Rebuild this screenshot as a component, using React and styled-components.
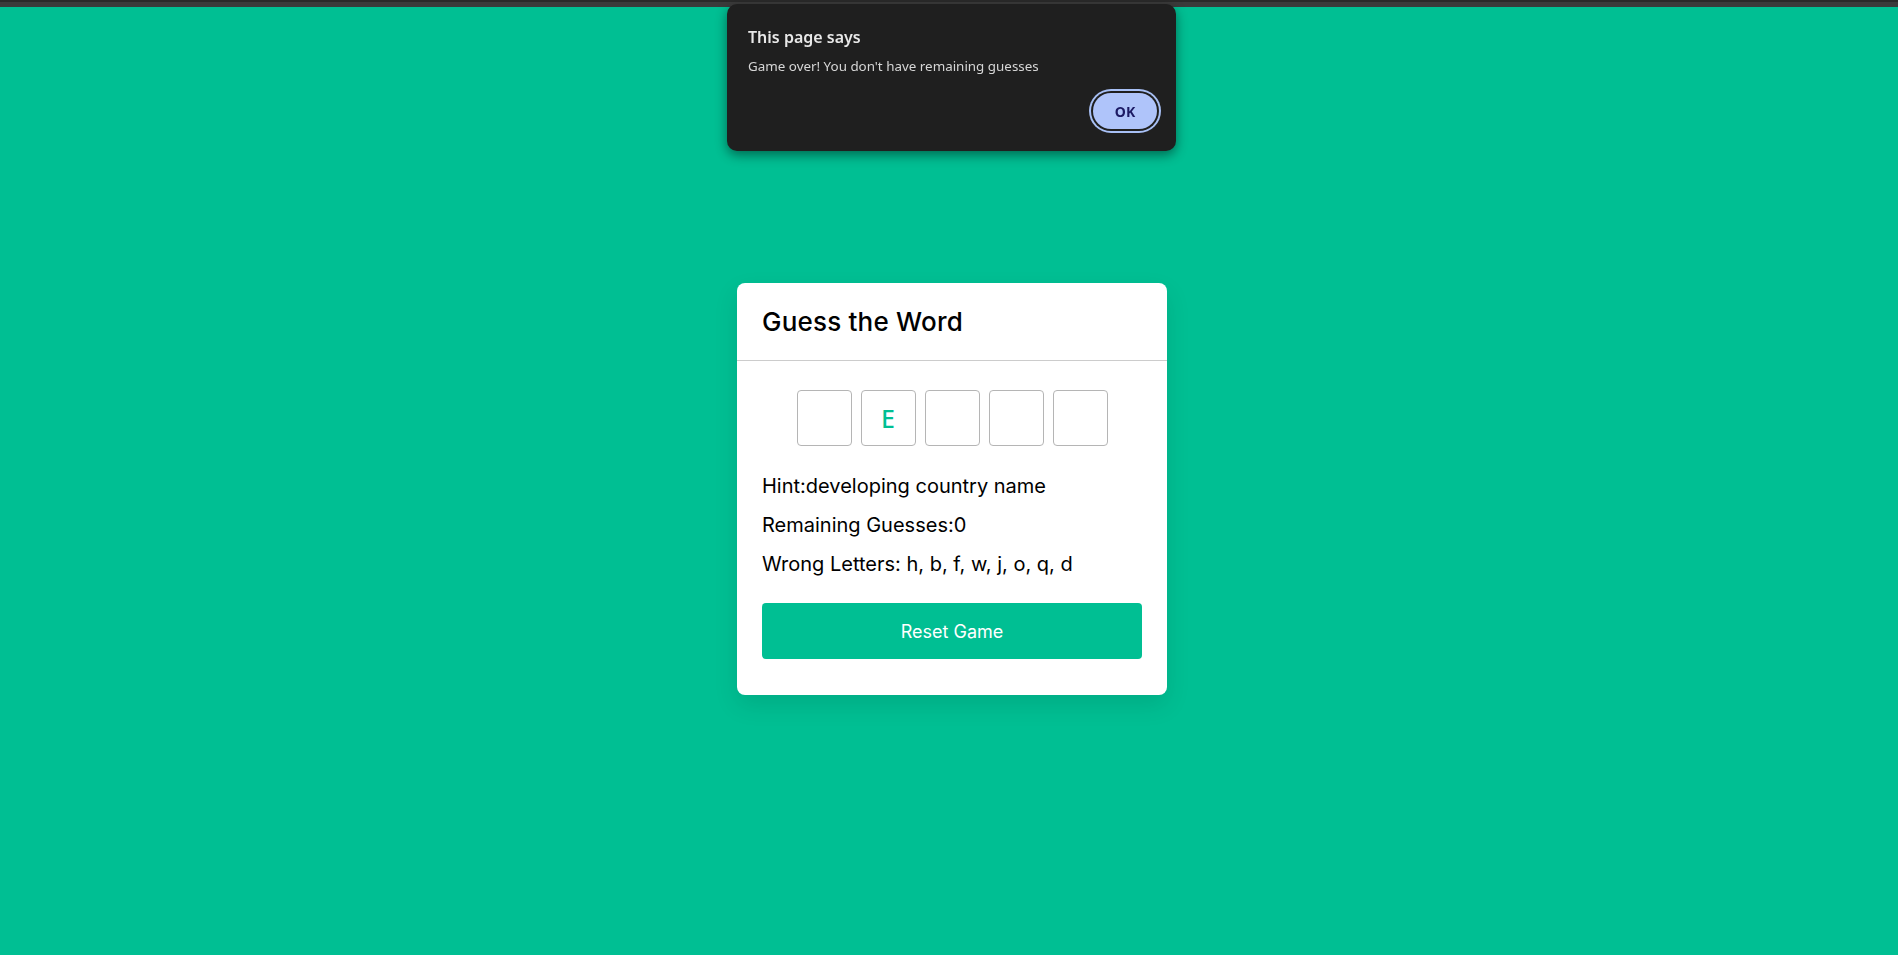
import React, { useState } from "react";
import styled, { createGlobalStyle } from "styled-components";

const GlobalStyle = createGlobalStyle`
  * { box-sizing: border-box; }
  body {
    margin: 0;
    background: #00bf93;
    font-family: "Inter", "Noto Sans", sans-serif;
  }
`;

const Page = styled.div`
  min-height: 100vh;
  display: flex;
  flex-direction: column;
`;

const TopStrip = styled.div`
  height: 7px;
  background: #3b3b3b;
  border-top: 2px solid #2a2a2a;
`;

const Main = styled.main`
  flex: 1;
  display: flex;
  align-items: center;
  justify-content: center;
  padding: 16px 0 0 6px;
`;

const Card = styled.div`
  width: 430px;
  background: #fff;
  border-radius: 8px;
  box-shadow: 0 10px 25px rgba(0, 0, 0, 0.1);
`;

const Header = styled.div`
  height: 78px;
  display: flex;
  align-items: center;
  padding: 0 25px;
  border-bottom: 1px solid #cccccc;
`;

const Title = styled.h1`
  margin: 0;
  font-size: 26px;
  font-weight: 500;
  color: #000;
  letter-spacing: 0.2px;
`;

const Body = styled.div`
  padding: 29px 25px 36px;
`;

const Boxes = styled.div`
  display: flex;
  justify-content: center;
  gap: 9px;
  margin-bottom: 20px;
`;

const LetterBox = styled.div`
  width: 55px;
  height: 56px;
  border: 1px solid #b5b5b5;
  border-radius: 4px;
  display: flex;
  align-items: center;
  justify-content: center;
  font-family: "Noto Sans", sans-serif;
  font-size: 25px;
  font-weight: 500;
  color: #00bf93;
  text-transform: uppercase;
`;

const Info = styled.p`
  margin: 0;
  height: 39px;
  display: flex;
  align-items: center;
  font-size: 20px;
  color: #000;
`;

const ResetButton = styled.button`
  display: block;
  width: 100%;
  height: 56px;
  margin-top: 20px;
  border: none;
  border-radius: 4px;
  background: #00bf93;
  color: #fff;
  font-family: "Inter", "Noto Sans", sans-serif;
  font-size: 18px;
  font-weight: 400;
  cursor: pointer;
`;

const Dialog = styled.div`
  position: fixed;
  top: 4px;
  left: 727px;
  width: 449px;
  height: 147px;
  background: #1f1f1f;
  border-radius: 10px;
  box-shadow: 0 4px 12px rgba(0, 0, 0, 0.45);
  padding: 22px 21px 0;
  font-family: "Noto Sans", sans-serif;
  color: #e3e3e3;
  display: flex;
  flex-direction: column;
`;

const DialogTitle = styled.div`
  font-size: 16px;
  font-weight: 600;
  color: #e8e8e8;
`;

const DialogText = styled.div`
  margin-top: 9px;
  font-size: 13.4px;
  color: #d6d6d6;
`;

const DialogActions = styled.div`
  display: flex;
  justify-content: flex-end;
  margin-top: 18px;
`;

const OkButton = styled.button`
  width: 64px;
  height: 36px;
  border-radius: 18px;
  border: none;
  background: #afc4fa;
  color: #1c1a64;
  font-family: "Noto Sans", sans-serif;
  font-size: 14px;
  font-weight: 700;
  box-shadow: 0 0 0 2px #1f1f1f, 0 0 0 4px #a8c0f5;
  margin-right: -2px;
`;

export default function App() {
  const [letters] = useState(["", "e", "", "", ""]);
  const wrong = ["h", "b", "f", "w", "j", "o", "q", "d"];

  return (
    <Page>
      <GlobalStyle />
      <TopStrip />
      <Main>
        <Card>
          <Header>
            <Title>Guess the Word</Title>
          </Header>
          <Body>
            <Boxes>
              {letters.map((l, i) => (
                <LetterBox key={i}>{l}</LetterBox>
              ))}
            </Boxes>
            <Info>Hint:developing country name</Info>
            <Info>Remaining Guesses:0</Info>
            <Info>Wrong Letters: {wrong.join(", ")}</Info>
            <ResetButton>Reset Game</ResetButton>
          </Body>
        </Card>
      </Main>
      <Dialog>
        <DialogTitle>This page says</DialogTitle>
        <DialogText>Game over! You don't have remaining guesses</DialogText>
        <DialogActions>
          <OkButton>OK</OkButton>
        </DialogActions>
      </Dialog>
    </Page>
  );
}
